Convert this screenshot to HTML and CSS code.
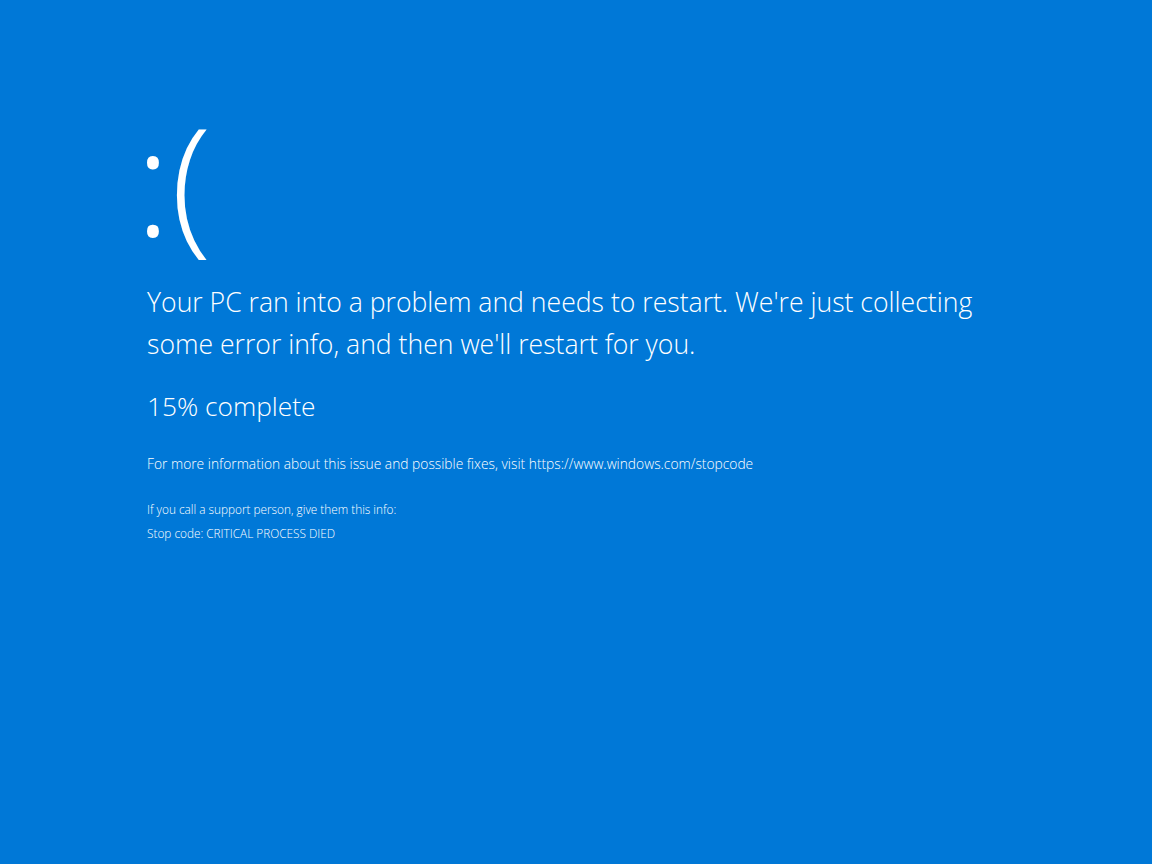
FILE: index.html
```html
<!DOCTYPE html>
<html lang="en">
<head>
<meta charset="utf-8">
<title>Your PC ran into a problem</title>
<link rel="stylesheet" href="styles.css">
</head>
<body>
<main class="screen">
  <div class="face">:(</div>
  <p class="message">Your PC ran into a problem and needs to restart. We're just collecting<br>some error info, and then we'll restart for you.</p>
  <p class="progress">15% complete</p>
  <p class="info">For more information about this issue and possible fixes, visit https://www.windows.com/stopcode</p>
  <p class="support">If you call a support person, give them this info:</p>
  <p class="support stop">Stop code: CRITICAL PROCESS DIED</p>
</main>
</body>
</html>
```
FILE: styles.css
```css
html, body {
  margin: 0;
  padding: 0;
  background: #0078d7;
  height: 100%;
}
.screen {
  box-sizing: border-box;
  width: 1152px;
  height: 864px;
  padding: 83px 0 0 147px;
  color: #ffffff;
  font-family: "Open Sans", "Noto Sans", "DejaVu Sans", sans-serif;
  font-weight: 300;
  display: flex;
  flex-direction: column;
  align-items: flex-start;
}
.face {
  font-size: 150px;
  line-height: 190px;
  margin-left: -12px;
  font-weight: 300;
}
.message {
  margin: 8px 0 0;
  font-size: 26.6px;
  line-height: 42px;
}
.progress {
  margin: 20px 0 0;
  font-size: 26.3px;
  line-height: 42px;
}
.info {
  margin: 27px 0 0;
  font-size: 13.8px;
  line-height: 20px;
}
.support {
  margin: 27px 0 0;
  font-size: 11.8px;
  line-height: 16px;
}
.support.stop {
  margin-top: 8px;
}
```
